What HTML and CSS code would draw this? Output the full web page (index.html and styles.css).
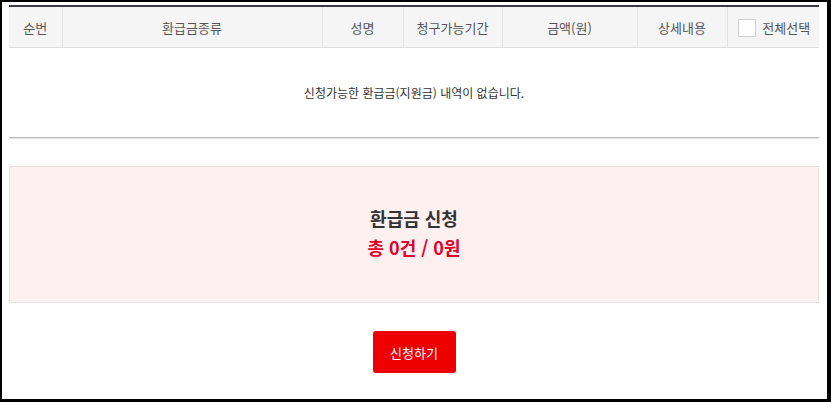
FILE: index.html
```html
<!DOCTYPE html>
<html lang="ko">
<head>
<meta charset="utf-8">
<link rel="stylesheet" href="styles.css">
</head>
<body>
<div class="frame">
  <table class="list">
    <colgroup>
      <col class="c1"><col class="c2"><col class="c3"><col class="c4"><col class="c5"><col class="c6"><col class="c7">
    </colgroup>
    <thead>
      <tr>
        <th>순번</th>
        <th>환급금종류</th>
        <th>성명</th>
        <th>청구가능기간</th>
        <th>금액(원)</th>
        <th>상세내용</th>
        <th class="all"><label class="chk"><span class="box"></span><span class="lbl">전체선택</span></label></th>
      </tr>
    </thead>
    <tbody>
      <tr><td colspan="7" class="empty">신청가능한 환급금(지원금) 내역이 없습니다.</td></tr>
    </tbody>
  </table>
  <div class="summary">
    <div class="sum-title">환급금 신청</div>
    <div class="sum-total">총 0건 / 0원</div>
  </div>
  <div class="actions">
    <button class="apply" type="button">신청하기</button>
  </div>
</div>
</body>
</html>
```
FILE: styles.css
```css
html, body { margin: 0; padding: 0; }
body {
  font-family: "Noto Sans CJK KR", "Noto Sans", sans-serif;
  background: #fff;
  color: #333;
}
.frame {
  box-sizing: border-box;
  width: 831px;
  height: 402px;
  border-style: solid;
  border-color: #000;
  border-width: 2px 4px 3px 2px;
  padding: 3px 8px 0 7px;
  background: #fff;
}
.list {
  width: 810px;
  border-collapse: collapse;
  table-layout: fixed;
  border-top: 2px solid #3b3b4b;
  border-bottom: 1px solid #bdbdbd;
  box-shadow: 0 1px 0 #e2e2e2;
}
.c1 { width: 53px; }
.c2 { width: 260px; }
.c3 { width: 81px; }
.c4 { width: 99px; }
.c5 { width: 135px; }
.c6 { width: 90px; }
.c7 { width: 92px; }
.list th {
  height: 40px;
  padding: 0;
  background: #f5f5f5;
  border-bottom: 1px solid #e0e0e0;
  border-left: 1px solid #e2e2e2;
  font-weight: 400;
  font-size: 13px;
  color: #555;
  text-align: center;
  vertical-align: middle;
}
.list th:first-child { border-left: 0; }
.chk {
  display: flex;
  align-items: center;
  justify-content: center;
  gap: 6px;
  padding-left: 2px;
  height: 40px;
}
.box {
  display: block;
  box-sizing: border-box;
  width: 18px;
  height: 18px;
  border: 1px solid #cfcfcf;
  background: #fff;
  margin-top: 2px;
}
.lbl {
  display: block;
  line-height: 18px;
  margin-top: 2px;
}
.empty {
  height: 89px;
  padding: 0;
  text-align: center;
  vertical-align: middle;
  font-size: 12px;
  color: #333;
}
.summary {
  margin-top: 28px;
  width: 810px;
  box-sizing: border-box;
  height: 137px;
  background: #fdf0f0;
  border: 1px solid #e8dfe0;
  display: flex;
  flex-direction: column;
  align-items: center;
  justify-content: center;
  gap: 2px;
}
.sum-title {
  font-size: 18px;
  font-weight: 700;
  color: #333;
  line-height: 27px;
  margin-top: -3px;
}
.sum-total {
  font-size: 18px;
  font-weight: 700;
  color: #e0002a;
  line-height: 27px;
}
.actions {
  width: 810px;
  display: flex;
  justify-content: center;
  margin-top: 28px;
}
.apply {
  width: 83px;
  height: 42px;
  border: 0;
  border-radius: 3px;
  background: #ee0000;
  color: #fff;
  font-family: inherit;
  font-size: 13px;
  padding: 0;
}
```
